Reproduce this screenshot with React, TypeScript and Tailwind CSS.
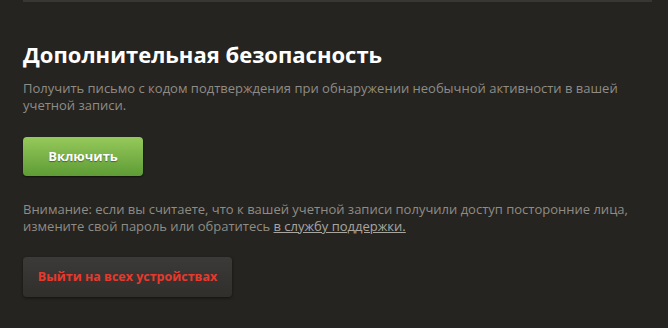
export default function App() {
  return (
    <div className="w-[668px] h-[328px] bg-[#252420] px-[23px] font-['Open_Sans',sans-serif] overflow-hidden">
      <div className="h-[2px] bg-[#383733] mr-[-7px]" />
      <h2 className="mt-[38px] text-[22px] leading-[28px] font-bold text-white">Дополнительная безопасность</h2>
      <p className="mt-[12px] text-[13px] leading-[17px] text-[#8f8c86] w-[615px]">
        Получить письмо с кодом подтверждения при обнаружении необычной активности в вашей учетной записи.
      </p>
      <button className="mt-[23px] w-[120px] h-[39px] rounded-[4px] bg-gradient-to-b from-[#96c95b] to-[#5e9c35] text-white text-[13px] font-bold [text-shadow:0_1px_1px_rgba(0,0,0,0.4)] shadow-[0_1px_2px_rgba(0,0,0,0.5)]">
        Включить
      </button>
      <p className="mt-[25px] text-[13px] leading-[17px] text-[#8f8c86]">
        Внимание: если вы считаете, что к вашей учетной записи получили доступ посторонние лица,
        <br />
        измените свой пароль или обратитесь{' '}
        <a href="#" className="underline text-[#a9a6a0]">в службу поддержки.</a>
      </p>
      <button className="mt-[22px] w-[209px] h-[40px] rounded-[4px] bg-gradient-to-b from-[#3b3a38] to-[#302f2c] text-[#e8392d] text-[12.5px] font-bold shadow-[0_1px_3px_rgba(0,0,0,0.5)]">
        Выйти на всех устройствах
      </button>
    </div>
  )
}
